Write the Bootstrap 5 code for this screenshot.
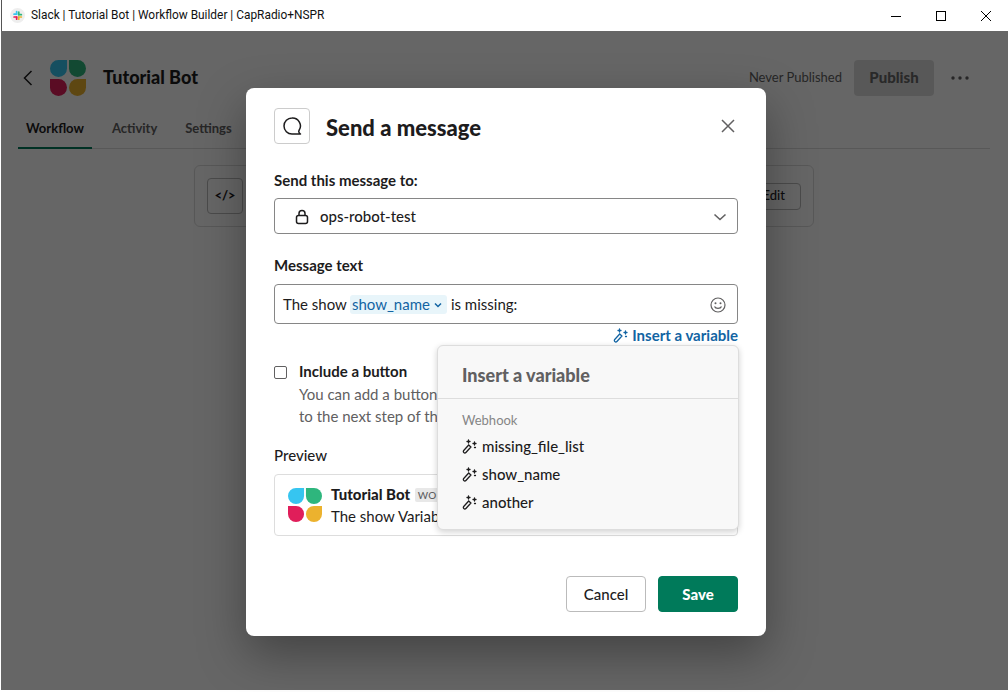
<!doctype html>
<html lang="en">
<head>
<meta charset="utf-8">
<title>Slack | Tutorial Bot</title>
<link rel="stylesheet" href="https://cdn.jsdelivr.net/npm/bootstrap@5.3.0/dist/css/bootstrap.min.css">
<style>
html,body{height:100%;overflow:hidden}
body{font-family:Lato,"Liberation Sans",sans-serif;color:#1d1c1d;font-size:15px;background:#fff}
.win{height:692px;width:1008px;position:relative}
.tbar{height:31px;margin-left:1px;padding-left:8px;font-family:Roboto,"Liberation Sans",sans-serif;font-size:11.9px;color:#111;border-left:1px solid #555}
.tbar-ic{margin-right:6px}
.tbar-ctl{gap:35px;padding-right:17px}
.appbody{height:659px;background:#fff;padding:0 18px 0 17px;margin-left:1px}
.apphead{height:93px;padding:0 0 0 4px}
.apptitle{font-size:18px;font-weight:900;margin:0 0 0 17px}
.never{font-size:13px;color:#616061;margin-right:12px}
.pubbtn{width:80px;height:36px;background:#ddd;border-radius:4px;font-weight:900;color:#666;border:0;font-size:15px}
.dots{margin:0 21px 0 17px}
.apptabs{height:24px;border-bottom:1px solid #ddd;box-sizing:content-box;font-size:13px;font-weight:700;color:#616061}
.tabitem{padding:0 8px;height:24px;line-height:8px;margin-right:12px}
.tabon{color:#1d1c1d;border-bottom:2px solid #007a5a;height:25px}
.wfcard{width:620px;height:62px;margin:16px 0 0 176px;border:1px solid #ddd;border-radius:6px;padding:0 12px}
.codebtn{width:36px;height:36px;border:1px solid #bbb;border-radius:4px;font-size:13px;font-weight:900}
.editbtn{height:27px;border:1px solid #bbb;border-radius:4px;padding:0 15px 0 11px;font-size:13px;font-weight:500}
.dimmer{position:absolute;left:1px;right:0;top:31px;bottom:2px;background:rgba(0,0,0,.6)}
.sheet{position:absolute;left:246px;top:88px;width:520px;height:548px;background:#fff;border-radius:8px;padding:20px 28px 24px;box-shadow:0 18px 48px rgba(0,0,0,.35)}
.iconbox{width:36px;height:36px;border:1px solid #ccc;border-radius:4px}
.sheet-title{font-size:22px;font-weight:900;margin-left:16px;line-height:36px;height:36px;padding-top:2px;box-sizing:content-box;margin-bottom:-2px}
.fieldlabel{font-weight:700;font-size:15px;line-height:22px;margin:0 0 7px;color:#1d1c1d}
.lab-top{margin-top:25px}
.lab-msg{margin-top:20px;margin-bottom:8px}
.lab-prev{margin-top:17px;margin-bottom:8px;font-weight:500}
.fieldbox{border:1px solid #868686;border-radius:4px;width:464px}
.sel{height:36px;padding:1px 10px 0 20px}
.sel-ic{margin-right:11px}
.msgin{height:40px;padding:1px 11px 0 8px}
.chip{background:#e8f5fa;color:#1264a3;border-radius:3px;padding:0 5px 0 2px;margin:0 4px 0 3px;height:19px;line-height:19px}
.inslink{color:#1264a3;font-weight:700;font-size:15px;line-height:22px}
.ckrow{margin-top:14px}
.cknote{color:#616061;line-height:22px}
.ckbox{width:13px;height:13px;border:1px solid #616061;border-radius:2px;margin:6px 12px 0 0;flex:none;background:#fff}
.prev{width:464px;height:62px;border:1px solid #ddd;border-radius:4px;padding:8px 12px 0 13px}
.prevlogo{margin:5px 9px 0 0;flex:none}
.prevname{font-weight:900;line-height:22px}
.wftag{background:#e8e8e8;color:#616061;font-size:10px;line-height:14px;padding:0 3px;border-radius:2px;margin-left:1px;letter-spacing:.4px;font-weight:500;display:inline-block;vertical-align:1px}
.sbtn{width:80px;height:36px;border-radius:4px;font-size:15px;line-height:32px;padding:0 0 1px;font-weight:700}
.sbtn-c{background:#fff;border:1px solid #bbb;color:#1d1c1d;font-weight:500}
.sbtn-s{background:#007a5a;border:1px solid #007a5a;color:#fff;font-weight:900;margin-left:12px}
.varpop{position:absolute;left:437px;top:345px;width:302px;height:185px;background:#f8f8f8;border:1px solid #ddd;border-radius:6px;box-shadow:0 2px 6px rgba(0,0,0,.18)}
.varhead{height:53px;padding:0 0 0 24px;border-bottom:1px solid #ddd;font-size:18px;font-weight:900;color:#616061;line-height:58px}
.vargroup{font-size:13px;color:#868686;padding:0 0 0 24px;margin:12px 0 3px;line-height:18px}
.varitem{padding-left:24px;height:28px;font-weight:500;font-size:15px}
.varitem svg{margin-right:5px}
</style>
</head>
<body>
<div class="win">
  <div class="tbar d-flex align-items-center">
    <svg width="15" height="15" viewBox="0 0 14 14" class="tbar-ic"><circle cx="7" cy="7" r="7" fill="#eee"/><rect x="3" y="5" width="4" height="1.6" rx=".8" fill="#36c5f0"/><rect x="5.4" y="2.6" width="1.6" height="3.4" rx=".8" fill="#36c5f0"/><rect x="7.4" y="3" width="1.6" height="4" rx=".8" fill="#2eb67d"/><rect x="7.4" y="5.4" width="4" height="1.6" rx=".8" fill="#2eb67d"/><rect x="7.4" y="7.6" width="4" height="1.6" rx=".8" fill="#ecb22e"/><rect x="7.4" y="7.6" width="1.6" height="3.6" rx=".8" fill="#ecb22e"/><rect x="3" y="7.6" width="4" height="1.6" rx=".8" fill="#e01e5a"/><rect x="5.4" y="7.6" width="1.6" height="3.6" rx=".8" fill="#e01e5a"/></svg>
    <span>Slack | Tutorial Bot | Workflow Builder | CapRadio+NSPR</span>
    <div class="tbar-ctl ms-auto d-flex align-items-center">
      <svg width="10" height="10" viewBox="0 0 10 10"><path d="M0 5.5h10" stroke="#000" fill="none"/></svg>
      <svg width="10" height="10" viewBox="0 0 10 10"><rect x=".5" y=".5" width="9" height="9" fill="none" stroke="#000"/></svg>
      <svg width="10" height="10" viewBox="0 0 10 10"><path d="M0 0l10 10M10 0L0 10" stroke="#000" fill="none"/></svg>
    </div>
  </div>
  <div class="appbody">
    <div class="apphead d-flex align-items-center">
      <svg width="12" height="18" viewBox="0 0 12 18" class="me-3"><path d="M9.5 2L2.5 9l7 7" fill="none" stroke="#1d1c1d" stroke-width="1.5"/></svg>
      <svg width="36" height="36" viewBox="0 0 36 36"><use href="#lg"/></svg>
      <div class="apptitle">Tutorial Bot</div>
      <div class="ms-auto d-flex align-items-center">
        <span class="never">Never Published</span>
        <button class="pubbtn">Publish</button>
        <svg width="18" height="4" viewBox="0 0 18 4" class="dots"><circle cx="2" cy="2" r="1.7" fill="#616061"/><circle cx="9" cy="2" r="1.7" fill="#616061"/><circle cx="16" cy="2" r="1.7" fill="#616061"/></svg>
      </div>
    </div>
    <div class="apptabs d-flex">
      <div class="tabitem tabon">Workflow</div>
      <div class="tabitem">Activity</div>
      <div class="tabitem">Settings</div>
    </div>
    <div class="wfcard d-flex align-items-center justify-content-between">
      <div class="codebtn d-flex align-items-center justify-content-center">&lt;/&gt;</div>
      <div class="editbtn d-flex align-items-center">Edit</div>
    </div>
  </div>
  <div class="dimmer"></div>

  <div class="sheet d-flex flex-column">
    <div class="d-flex align-items-start">
      <div class="iconbox d-flex align-items-center justify-content-center">
        <svg width="20" height="20" viewBox="0 0 20 20"><path d="M10 2a8 8 0 1 0 0 16h8.5c-1.500-1-2-2.500-1.500-3.500A8 8 0 0 0 10 2z" fill="none" stroke="#1d1c1d" stroke-width="1.500" stroke-linejoin="round"/></svg>
      </div>
      <div class="sheet-title">Send a message</div>
      <svg class="ms-auto mt-2" width="20" height="20" viewBox="0 0 20 20"><path d="M4 4l12 12M16 4L4 16" stroke="#616061" stroke-width="1.500" fill="none"/></svg>
    </div>
    <div class="fieldlabel lab-top">Send this message to:</div>
    <div class="fieldbox sel d-flex align-items-center">
      <svg width="14" height="16" viewBox="0 0 14 16" class="sel-ic"><rect x="1.500" y="6.500" width="11" height="8" rx="2" fill="none" stroke="#1d1c1d" stroke-width="1.500"/><path d="M4 6.500V4.500a3 3 0 0 1 6 0v2" fill="none" stroke="#1d1c1d" stroke-width="1.500"/></svg>
      <span class="fw-medium">ops-robot-test</span>
      <svg class="ms-auto" width="14" height="8" viewBox="0 0 14 8"><path d="M1.500 1.500L7 6.500l5.500-5" fill="none" stroke="#616061" stroke-width="1.600"/></svg>
    </div>
    <div class="fieldlabel lab-msg">Message text</div>
    <div class="fieldbox msgin d-flex align-items-center">
      <span>The show</span>
      <span class="chip d-inline-flex align-items-center">show_name<svg class="ms-1" width="8" height="6" viewBox="0 0 8 6"><path d="M1 1.500L4 4.500l3-3" fill="none" stroke="#1264a3" stroke-width="1.500"/></svg></span>
      <span>is missing:</span>
      <svg class="ms-auto" width="16" height="16" viewBox="0 0 16 16"><circle cx="8" cy="8" r="7" fill="none" stroke="#616061" stroke-width="1.200"/><circle cx="5.500" cy="6.200" r="1" fill="#616061"/><circle cx="10.500" cy="6.200" r="1" fill="#616061"/><path d="M4.500 9.500c1 2.400 6 2.400 7 0" fill="none" stroke="#616061" stroke-width="1.200"/></svg>
    </div>
    <div class="inslink d-flex justify-content-end align-items-center">
      <svg width="15" height="15" viewBox="0 0 15 15" class="me-1"><use href="#wand"/></svg>Insert a variable
    </div>
    <div class="d-flex ckrow">
      <div class="ckbox"></div>
      <div>
        <div class="fw-bold lh-base">Include a button</div>
        <div class="cknote">You can add a button if you want people to be able to continue<br>to the next step of the workflow.</div>
      </div>
    </div>
    <div class="fieldlabel lab-prev">Preview</div>
    <div class="prev d-flex">
      <svg width="34" height="34" viewBox="0 0 36 36" class="prevlogo"><use href="#lg"/></svg>
      <div>
        <div class="prevname">Tutorial Bot <span class="wftag">WORKFLOW</span></div>
        <div class="lh-base">The show Variable is missing:</div>
      </div>
    </div>
    <div class="mt-auto d-flex justify-content-end">
      <button class="sbtn sbtn-c">Cancel</button>
      <button class="sbtn sbtn-s">Save</button>
    </div>
  </div>

  <div class="varpop">
    <div class="varhead">Insert a variable</div>
    <div class="vargroup">Webhook</div>
    <div class="varitem d-flex align-items-center"><svg width="15" height="15" viewBox="0 0 15 15"><use href="#wand"/></svg>missing_file_list</div>
    <div class="varitem d-flex align-items-center"><svg width="15" height="15" viewBox="0 0 15 15"><use href="#wand"/></svg>show_name</div>
    <div class="varitem d-flex align-items-center"><svg width="15" height="15" viewBox="0 0 15 15"><use href="#wand"/></svg>another</div>
  </div>
</div>
<svg width="0" height="0" class="position-absolute">
  <defs>
    <g id="wand" fill="none" stroke="currentColor" stroke-width="1.300" stroke-linecap="round">
      <path d="M1.700 11.500l5-5.500 2.200 2-5 5.500a1.400 1.400 0 0 1-2.200-2z"/>
      <path d="M6.500 1v3M5 2.500h3M12.500 3v3M11 4.500h3M12.500 8.500h1"/>
    </g>
    <g id="lg"><path d="M8.500 0H17v8.500A8.500 8.500 0 0 1 0 8.500 8.500 8.500 0 0 1 8.500 0z" fill="#36c5f0"/><path d="M19 0h8.500a8.500 8.500 0 0 1 0 17 8.500 8.500 0 0 1-8.500-8.500z" fill="#2eb67d"/><path d="M0 19h8.500a8.500 8.500 0 0 1 0 17A8.500 8.500 0 0 1 0 27.500z" fill="#e01e5a"/><path d="M27.500 19H36v8.500a8.500 8.500 0 0 1-17 0 8.500 8.500 0 0 1 8.500-8.500z" fill="#ecb22e"/></g>
  </defs>
</svg>
<script src="https://cdn.jsdelivr.net/npm/bootstrap@5.3.0/dist/js/bootstrap.bundle.min.js"></script>
</body>
</html>
